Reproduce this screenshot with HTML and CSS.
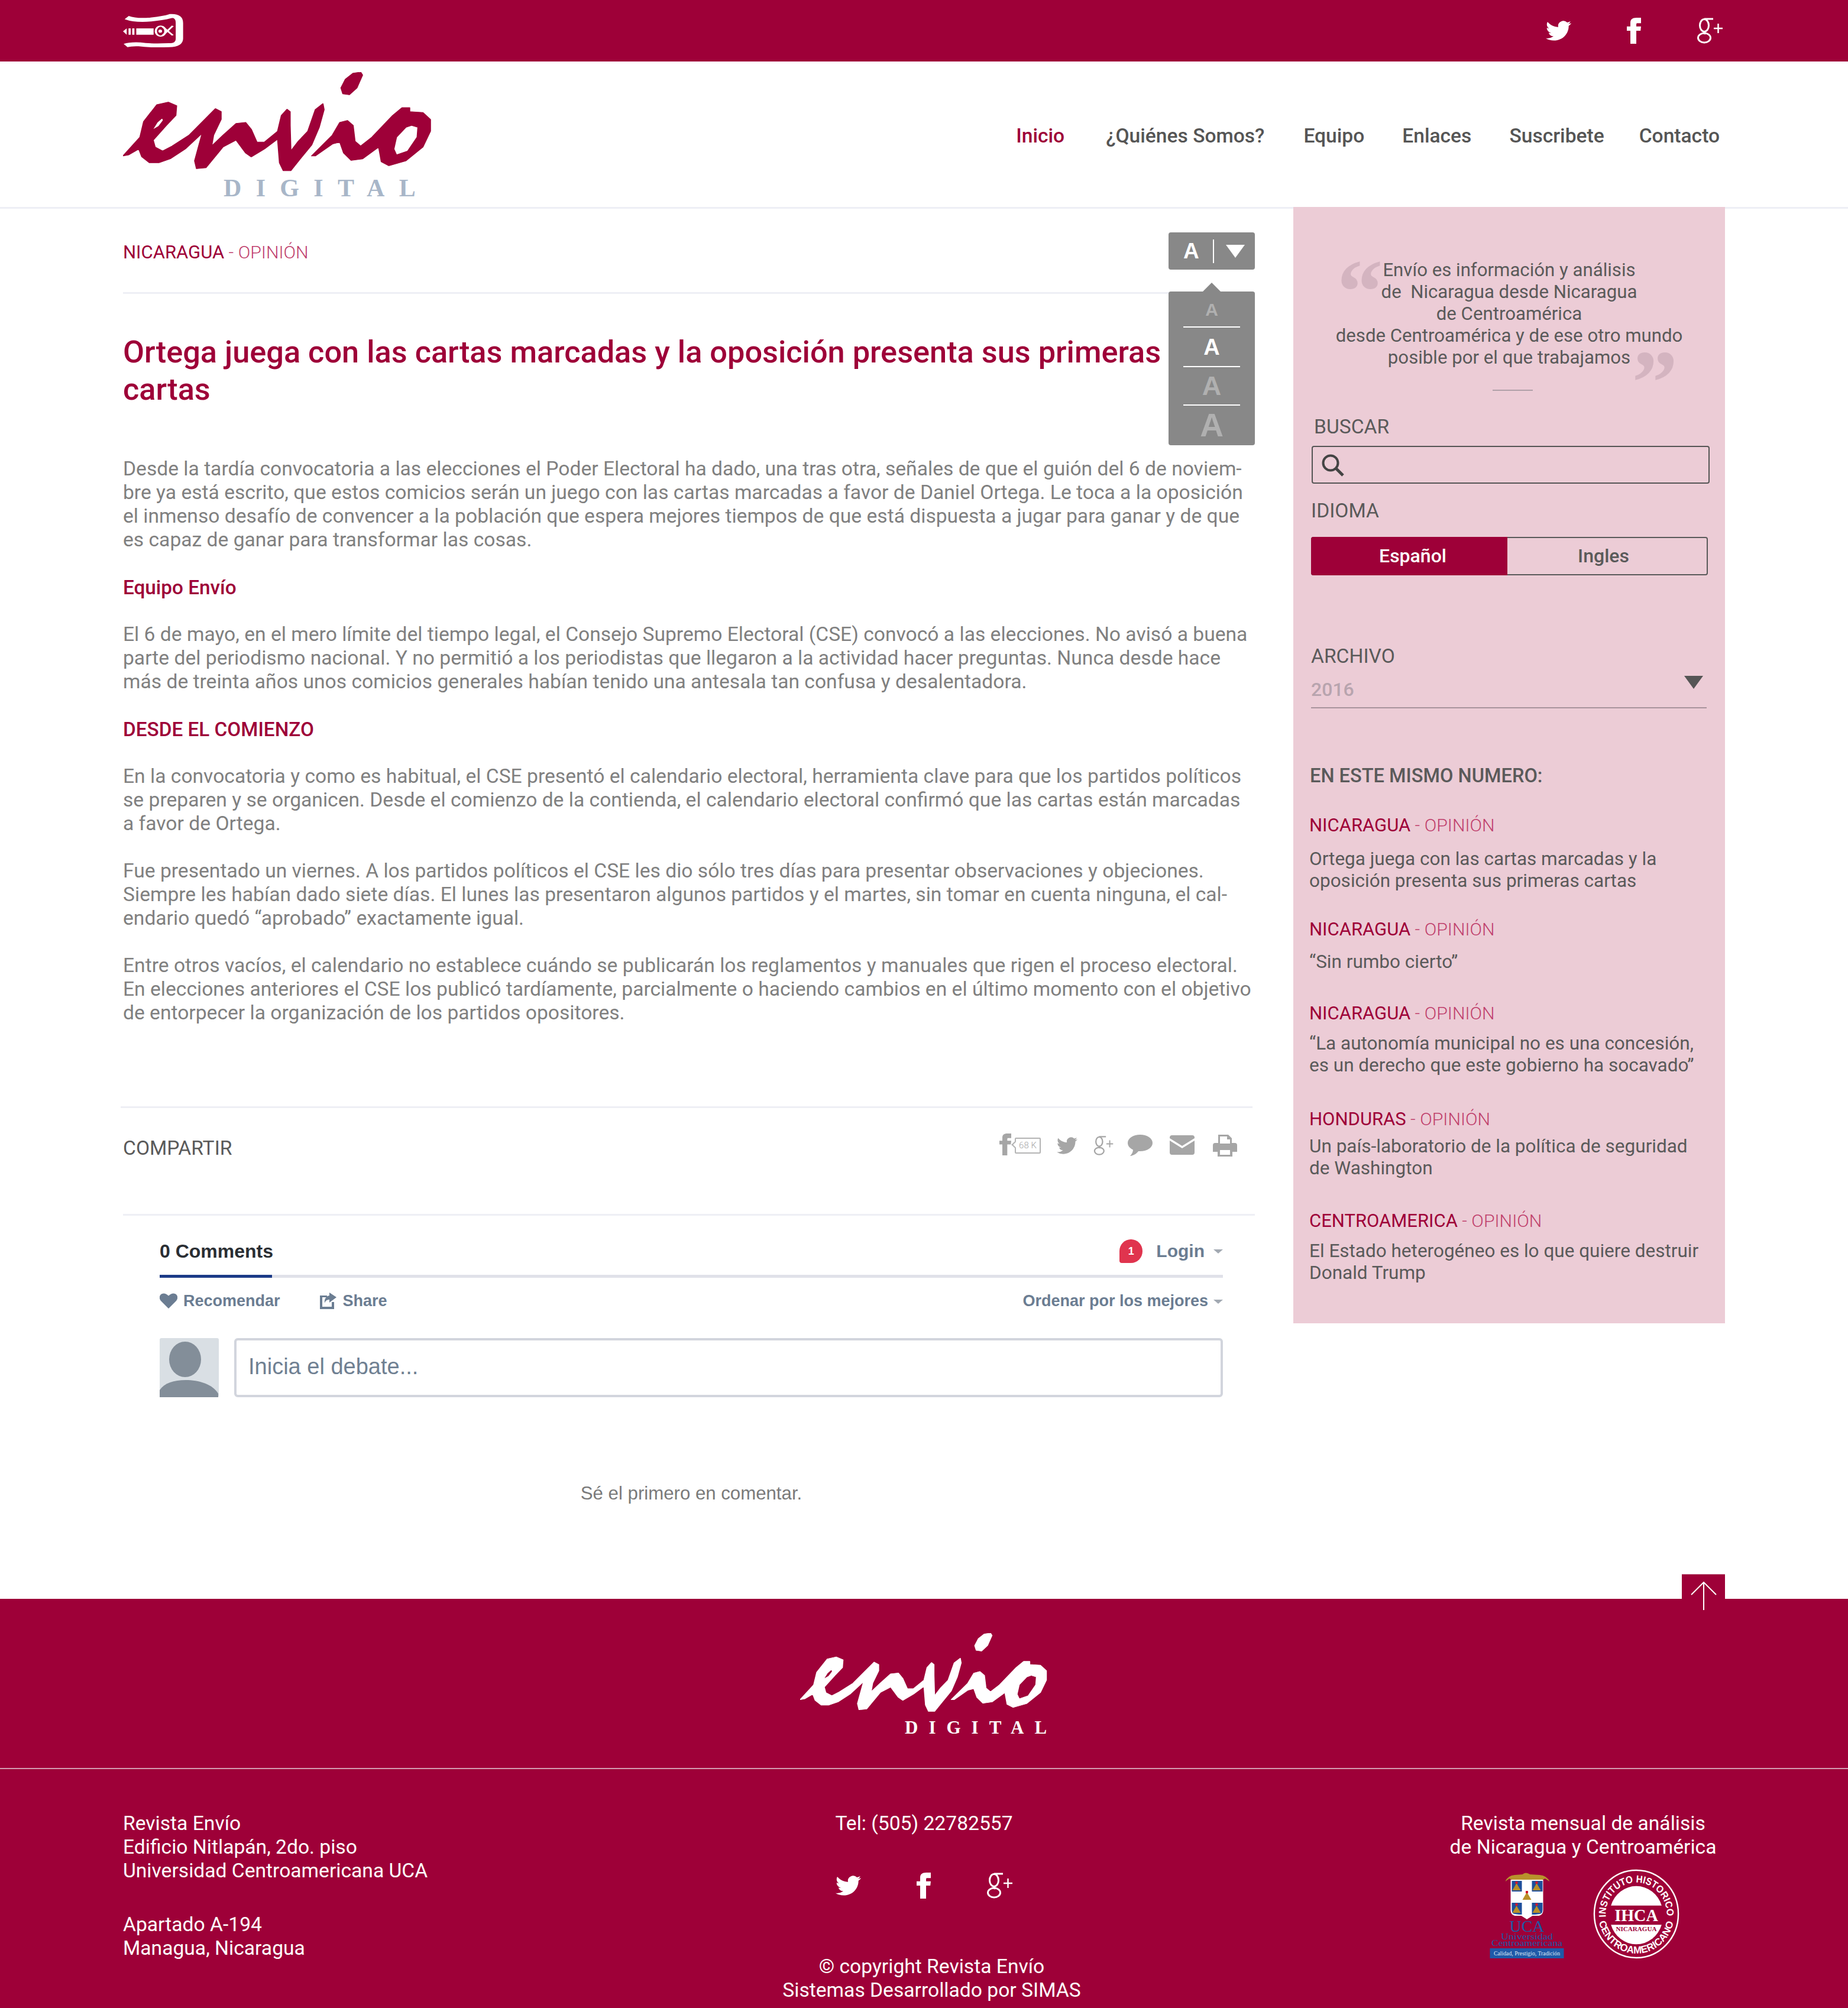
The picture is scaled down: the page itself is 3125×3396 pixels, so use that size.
FILE: index.html
```html
<!DOCTYPE html>
<html lang="es">
<head>
  <meta charset="UTF-8" />
  <title>Envío Digital</title>
  <link rel="stylesheet" href="styles.css">
</head>
<body>

  <!-- shared shapes -->
  <svg class="defs">
    <defs>
      <path id="envioMark" fill-rule="evenodd" d="M955 370L960 385L945 450L925 485L908 480L903 450L915 405L935 375Z
        M325 795L370 700L380 620L415 535L445 522L467 540L465 590L440 640L405 715L410 750L430 770L455 745L500 690L570 555L585 570L585 610L565 690L560 745L590 690L625 630L650 625L665 660L680 725L700 725L735 670L745 590L760 558L768 570L768 640L770 770L790 720L815 670L835 560L855 530L858 560L845 650L825 740L795 810L770 870L750 870L740 830L735 710L700 760L665 800L650 780L625 715L590 750L545 855L520 860L515 820L535 680L490 760L450 810L420 830L395 830L375 800L367 760L340 790Z
        M430 600L415 625L402 665L420 645L432 615Z
        M825 795L880 690L900 625L920 615L935 640L940 720L955 745L985 700L1040 590L1065 550L1085 550L1085 570L1120 575L1140 610L1140 670L1120 750L1075 820L1030 845L1010 825L1003 750L960 810L930 818L910 780L900 725L880 735L835 795Z
        M1090 640L1107 650L1105 700L1080 770L1050 790L1043 760L1050 700L1075 650Z"/>
      <path id="twitterBird" d="M23.953 4.57a10 10 0 01-2.825.775 4.958 4.958 0 002.163-2.723c-.951.555-2.005.959-3.127 1.184a4.92 4.92 0 00-8.384 4.482C7.69 8.095 4.067 6.13 1.64 3.162a4.822 4.822 0 00-.666 2.475c0 1.71.87 3.213 2.188 4.096a4.904 4.904 0 01-2.228-.616v.06a4.923 4.923 0 003.946 4.827 4.996 4.996 0 01-2.212.085 4.936 4.936 0 004.604 3.417 9.867 9.867 0 01-6.102 2.105c-.39 0-.779-.023-1.17-.067a13.995 13.995 0 007.557 2.209c9.053 0 13.998-7.496 13.998-13.985 0-.21 0-.42-.015-.63A9.935 9.935 0 0024 4.59z"/>
      <path id="fbLetter" d="M9 8H6v4h3v12h5V12h3.6l.4-4h-4V6.3c0-1 .2-1.3 1.1-1.3H18V0h-3.8C10.6 0 9 1.6 9 4.6V8z"/>
      <g id="gplusMark" fill="none" stroke="currentColor" stroke-width="3">
        <ellipse cx="13" cy="13" rx="7.5" ry="10.5"/>
        <ellipse cx="13" cy="34" rx="10.5" ry="8"/>
        <path d="M13 2H28M15 23Q10 26 15 27"/>
        <path d="M29 18H44M36.500 10V26" stroke-width="2.500"/>
      </g>
    </defs>
  </svg>

  <div class="topbar">
    <svg class="pen-logo" viewBox="325 65 170 180" preserveAspectRatio="none">
      <path d="M335 88Q360 105 400 98Q440 90 455 80Q478 78 478 115V195Q478 228 450 228Q400 232 370 224Q345 222 332 230" fill="none" stroke="#fff" stroke-width="20"/>
      <path d="M325 158L335 143V175ZM340 143H346V175H340ZM350 143H356V175H350ZM361 143H408V175H361Z" fill="#fff"/>
      <ellipse cx="427" cy="157" rx="13" ry="25" fill="none" stroke="#fff" stroke-width="6"/>
      <ellipse cx="426" cy="157" rx="5" ry="8" fill="#fff"/>
      <path d="M432 180L460 130M432 134L460 178" fill="none" stroke="#fff" stroke-width="6"/>
    </svg>
    <div class="social">
      <svg class="ico-tw" viewBox="0 0 24 20" preserveAspectRatio="none"><use href="#twitterBird" transform="translate(0 -2)"/></svg>
      <svg class="ico-fb" viewBox="6 0 12 24" preserveAspectRatio="none"><use href="#fbLetter"/></svg>
      <svg class="ico-gp" viewBox="0 0 45 44"><use href="#gplusMark"/></svg>
    </div>
  </div>

  <header class="header">
    <div class="brand">
      <svg class="brand-mark" viewBox="325 370 820 510" preserveAspectRatio="none"><use href="#envioMark"/></svg>
      <div class="brand-sub">DIGITAL</div>
    </div>
    <nav class="nav">
      <a class="active">Inicio</a>
      <a>¿Quiénes Somos?</a>
      <a>Equipo</a>
      <a>Enlaces</a>
      <a>Suscribete</a>
      <a>Contacto</a>
    </nav>
  </header>

  <div class="main">
    <main class="article">
      <div class="crumb-row">
        <div class="crumb"><b>NICARAGUA</b><span> - OPINIÓN</span></div>
        <div class="fontsize">
          <div class="fontsize-btn">
            <span class="fs-a">A</span>
            <span class="fs-sep"></span>
            <span class="fs-caret"></span>
          </div>
          <div class="fontsize-menu">
            <div class="fs-item fs-1">A</div>
            <div class="fs-item fs-2">A</div>
            <div class="fs-item fs-3">A</div>
            <div class="fs-item fs-4">A</div>
          </div>
        </div>
      </div>

      <h1 class="title">Ortega juega con las cartas marcadas y la oposición presenta sus primeras<br>cartas</h1>

      <p>Desde la tardía convocatoria a las elecciones el Poder Electoral ha dado, una tras otra, señales de que el guión del 6 de noviem-<br>bre ya está escrito, que estos comicios serán un juego con las cartas marcadas a favor de Daniel Ortega. Le toca a la oposición<br>el inmenso desafío de convencer a la población que espera mejores tiempos de que está dispuesta a jugar para ganar y de que<br>es capaz de ganar para transformar las cosas.</p>
      <p class="sub">Equipo Envío</p>
      <p>El 6 de mayo, en el mero límite del tiempo legal, el Consejo Supremo Electoral (CSE) convocó a las elecciones. No avisó a buena<br>parte del periodismo nacional. Y no permitió a los periodistas que llegaron a la actividad hacer preguntas. Nunca desde hace<br>más de treinta años unos comicios generales habían tenido una antesala tan confusa y desalentadora.</p>
      <p class="sub">DESDE EL COMIENZO</p>
      <p>En la convocatoria y como es habitual, el CSE presentó el calendario electoral, herramienta clave para que los partidos políticos<br>se preparen y se organicen. Desde el comienzo de la contienda, el calendario electoral confirmó que las cartas están marcadas<br>a favor de Ortega.</p>
      <p>Fue presentado un viernes. A los partidos políticos el CSE les dio sólo tres días para presentar observaciones y objeciones.<br>Siempre les habían dado siete días. El lunes las presentaron algunos partidos y el martes, sin tomar en cuenta ninguna, el cal-<br>endario quedó “aprobado” exactamente igual.</p>
      <p>Entre otros vacíos, el calendario no establece cuándo se publicarán los reglamentos y manuales que rigen el proceso electoral.<br>En elecciones anteriores el CSE los publicó tardíamente, parcialmente o haciendo cambios en el último momento con el objetivo<br>de entorpecer la organización de los partidos opositores.</p>

      <div class="share">
        <span class="share-label">COMPARTIR</span>
        <div class="share-icons">
          <svg class="sh-fb" viewBox="6 0 12 24" preserveAspectRatio="none"><use href="#fbLetter"/></svg>
          <span class="sh-count">68 K</span>
          <svg class="sh-tw" viewBox="0 0 24 20" preserveAspectRatio="none"><use href="#twitterBird" transform="translate(0 -2)"/></svg>
          <svg class="sh-gp" viewBox="0 0 45 44"><use href="#gplusMark"/></svg>
          <svg class="sh-chat" viewBox="0 0 42 36"><path d="M21 0C9.500 0 0 6 0 14c0 5 3.500 9 9 11.500C9 29 7 33 4 36c6-.500 11-4 14-8h3c11.500 0 21-6 21-14S32.500 0 21 0z"/></svg>
          <svg class="sh-mail" viewBox="0 0 42 33"><path d="M4 0H38A4 4 0 0 1 42 4V5L21 18L0 5V4A4 4 0 0 1 4 0ZM0 9L21 22L42 9V29A4 4 0 0 1 38 33H4A4 4 0 0 1 0 29Z"/></svg>
          <svg class="sh-print" viewBox="0 0 41 37"><path d="M9 0H26L32 6V14H37A4 4 0 0 1 41 18V29H33V37H8V29H0V18A4 4 0 0 1 4 14H9ZM12 3V15H29V8H24V3ZM12 26V34H29V26Z" fill-rule="evenodd"/></svg>
        </div>
      </div>

      <section class="comments">
        <div class="cm-head">
          <span class="cm-count">0 Comments</span>
          <span class="cm-login">
            <span class="cm-badge">1</span>
            Login
            <i class="cm-caret"></i>
          </span>
        </div>
        <div class="cm-actions">
          <span class="cm-act">
            <svg class="cm-heart" viewBox="0 0 30 26"><path d="M15 26L2.500 13.500C-1 10-1 5 2 2.300 5-.500 10-.500 15 4.500 20-.500 25-.500 28 2.300 31 5 31 10 27.500 13.500Z"/></svg>
            Recomendar
          </span>
          <span class="cm-act cm-share">
            <svg class="cm-export" viewBox="0 0 28 28"><path d="M0 5H12V8H4V24H20V16H24V28H0ZM16 0L28 8L16 17V12C12 12 9 14 8 18 7 10 11 6 16 5Z"/></svg>
            Share
          </span>
          <span class="cm-sort">Ordenar por los mejores<i class="cm-caret"></i></span>
        </div>
        <div class="cm-form">
          <svg class="cm-avatar" viewBox="0 0 100 100">
            <rect width="100" height="100" rx="3" fill="#d9dfe4"/>
            <ellipse cx="43" cy="36" rx="27" ry="30" fill="#838e99"/>
            <path d="M0 100V88C8 76 24 71 44 71 66 71 90 78 99 94V100Z" fill="#838e99"/>
          </svg>
          <div class="cm-input">Inicia el debate...</div>
        </div>
        <div class="cm-empty">Sé el primero en comentar.</div>
      </section>
    </main>

    <aside class="sidebar">
      <div class="quote">
        <span class="q-mark q-open">“</span>
        Envío es información y análisis<br>de&nbsp; Nicaragua desde Nicaragua<br>de Centroamérica<br>desde Centroamérica y de ese otro mundo<br>posible por el que trabajamos
        <span class="q-mark q-close">”</span>
      </div>
      <div class="q-rule"></div>

      <div class="side-label label-buscar">BUSCAR</div>
      <div class="search">
        <svg class="search-ico" viewBox="0 0 38 38"><circle cx="15" cy="15" r="12.500" fill="none" stroke="#444" stroke-width="4"/><path d="M24 24L36 36" stroke="#444" stroke-width="5"/></svg>
      </div>

      <div class="side-label label-idioma">IDIOMA</div>
      <div class="lang">
        <span class="lang-on">Español</span>
        <span class="lang-off">Ingles</span>
      </div>

      <div class="side-label label-archivo">ARCHIVO</div>
      <div class="year">
        <span>2016</span>
        <i class="year-caret"></i>
      </div>

      <div class="side-label label-numero">EN ESTE MISMO NUMERO:</div>
      <div class="issue">
        <div class="issue-item">
          <div class="issue-cat"><b>NICARAGUA</b><span> - OPINIÓN</span></div>
          <div class="issue-text">Ortega juega con las cartas marcadas y la<br>oposición presenta sus primeras cartas</div>
        </div>
        <div class="issue-item">
          <div class="issue-cat"><b>NICARAGUA</b><span> - OPINIÓN</span></div>
          <div class="issue-text">“Sin rumbo cierto”</div>
        </div>
        <div class="issue-item">
          <div class="issue-cat"><b>NICARAGUA</b><span> - OPINIÓN</span></div>
          <div class="issue-text">“La autonomía municipal no es una concesión,<br>es un derecho que este gobierno ha socavado”</div>
        </div>
        <div class="issue-item">
          <div class="issue-cat"><b>HONDURAS</b><span> - OPINIÓN</span></div>
          <div class="issue-text">Un país-laboratorio de la política de seguridad<br>de Washington</div>
        </div>
        <div class="issue-item">
          <div class="issue-cat"><b>CENTROAMERICA</b><span> - OPINIÓN</span></div>
          <div class="issue-text">El Estado heterogéneo es lo que quiere destruir<br>Donald Trump</div>
        </div>
      </div>
    </aside>
  </div>

  <footer class="footer">
    <a class="to-top">
      <svg viewBox="0 0 44 48"><path d="M22 48V1M1 22L22 1L43 22" fill="none" stroke="#fff" stroke-width="2"/></svg>
    </a>
    <div class="foot-brand">
      <div class="foot-brand-in">
        <svg class="foot-mark" viewBox="325 370 820 510" preserveAspectRatio="none"><use href="#envioMark"/></svg>
        <div class="foot-sub">DIGITAL</div>
      </div>
    </div>
    <div class="foot-cols">
      <div class="foot-left">
        <div>Revista Envío<br>Edificio Nitlapán, 2do. piso<br>Universidad Centroamericana UCA</div>
        <div class="foot-po">Apartado A-194<br>Managua, Nicaragua</div>
      </div>
      <div class="foot-mid">
        <div>Tel: (505) 22782557</div>
        <div class="social foot-social">
          <svg class="ico-tw" viewBox="0 0 24 20" preserveAspectRatio="none"><use href="#twitterBird" transform="translate(0 -2)"/></svg>
          <svg class="ico-fb" viewBox="6 0 12 24" preserveAspectRatio="none"><use href="#fbLetter"/></svg>
          <svg class="ico-gp" viewBox="0 0 45 44"><use href="#gplusMark"/></svg>
        </div>
        <div class="copy">© copyright Revista Envío<br>Sistemas Desarrollado por SIMAS</div>
      </div>
      <div class="foot-right">
        <div>Revista mensual de análisis<br>de Nicaragua y Centroamérica</div>
        <div class="foot-logos">
          <svg class="uca" viewBox="0 0 125 145">
            <path d="M26 15Q30 5 42 4L55 3Q60-2 68 3L84 4Q96 5 101 15L93 10Q88 14 70 12H55Q38 14 33 10Z" fill="#b8922c"/>
            <path d="M35 12H90V64Q90 71 83 73H72L62.500 79L53 73H42Q35 71 35 64Z" fill="#fff"/>
            <path d="M37 14H54V32H37ZM71 14H89V32H71ZM37 51H54V71Q44 71 39 69Q37 67 37 63ZM71 51H89V63Q89 67 87 69Q82 71 71 71Z" fill="#1f4f9c"/>
            <path d="M38 30L45 18L52 30ZM72 30L79 18L86 30ZM38 68L45 56L52 68ZM72 68L79 56L86 68ZM55 46L62.500 33L70 46Z" fill="#b98f28"/>
            <path d="M43 15H47V19H43ZM77 15H81V19H77ZM43 52H47V56H43ZM77 52H81V56H77ZM60.500 31H64.500V35H60.500Z" fill="#d3162a"/>
            <text class="uca-big" x="62.500" y="100" text-anchor="middle">UCA</text>
            <text class="uca-mid" x="62.500" y="113" text-anchor="middle" textLength="88" lengthAdjust="spacingAndGlyphs">Universidad</text>
            <text class="uca-mid" x="62.500" y="124" text-anchor="middle" textLength="120" lengthAdjust="spacingAndGlyphs">Centroamericana</text>
            <rect y="128" width="125" height="17" fill="#1e5aa8"/>
            <text class="uca-tag" x="62.500" y="140" text-anchor="middle" textLength="112" lengthAdjust="spacingAndGlyphs">Calidad, Prestigio, Tradición</text>
          </svg>
          <svg class="ihca" viewBox="0 0 150 150" preserveAspectRatio="none">
            <defs>
              <path id="arcTop" d="M22.200 80A53 53 0 1 1 127.800 80"/>
              <path id="arcBot" d="M10.300 88A66 66 0 0 0 139.700 88"/>
            </defs>
            <circle cx="75" cy="75" r="73" fill="none" stroke="#fff" stroke-width="2.500"/>
            <text class="ihca-ring"><textPath href="#arcTop" textLength="174" lengthAdjust="spacingAndGlyphs">INSTITUTO HISTORICO</textPath></text>
            <text class="ihca-ring"><textPath href="#arcBot" textLength="180" lengthAdjust="spacingAndGlyphs">CENTROAMERICANO</textPath></text>
            <path d="M31 61A46 46 0 0 1 119 61ZM31 93H119A46 46 0 0 1 31 93Z" fill="#fff"/>
            <text class="ihca-big" x="75" y="87" text-anchor="middle">IHCA</text>
            <text class="ihca-nic" x="75" y="104" text-anchor="middle" textLength="71" lengthAdjust="spacingAndGlyphs">NICARAGUA</text>
          </svg>
        </div>
      </div>
    </div>
  </footer>

</body>
</html>
```

FILE: styles.css
```css
body {
  margin: 0;
  width: 3125px;
  height: 3396px;
  overflow: hidden;
  font-family: Roboto, "Liberation Sans", sans-serif;
  font-size: 33.62px;
  line-height: 40px;
  color: #808080;
  background: #fff;
  white-space: nowrap;
}

.defs {
  position: absolute;
  width: 0;
  height: 0;
}

/* top bar */
.topbar {
  height: 104px;
  box-sizing: border-box;
  padding: 0 211px 0 208px;
  background: #9e0038;
  display: flex;
  align-items: center;
  justify-content: space-between;
}

.pen-logo {
  width: 106px;
  height: 60px;
}

.social {
  display: flex;
  align-items: center;
  gap: 94px;
  color: #fff;
}

.social svg {
  fill: currentColor;
}

.ico-tw { width: 43px; height: 34px; }
.ico-fb { width: 24px; height: 44px; }
.ico-gp { width: 45px; height: 44px; }

/* header */
.header {
  height: 249px;
  box-sizing: border-box;
  border-bottom: 3px solid #eeeff5;
  padding: 18px 0 0 208px;
  display: flex;
  justify-content: space-between;
}

.brand {
  width: 523px;
  color: #9e0038;
}

.brand-mark {
  display: block;
  width: 523px;
  height: 170px;
  fill: currentColor;
  stroke: currentColor;
  stroke-width: 3;
  stroke-linejoin: round;
}

.brand-sub {
  margin: 10px 0 0 170px;
  font-family: "Liberation Serif", serif;
  font-weight: bold;
  font-size: 42px;
  line-height: 32px;
  letter-spacing: 24.300px;
  color: #a8b6c8;
}

.nav {
  display: flex;
  gap: 66px;
  padding: 88px 217px 0 0;
  font-weight: 500;
  font-size: 33.600px;
  color: #555;
}

.nav .active {
  color: #9e0038;
}

.nav a:nth-child(2) { margin-left: 4px; }
.nav a:nth-child(4) { margin-left: -2px; }
.nav a:nth-child(5) { margin-left: -2px; }
.nav a:nth-child(6) { margin-left: -7px; }

/* page body */
.main {
  display: flex;
  align-items: flex-start;
  height: 2351px;
  padding-left: 208px;
}

.article {
  width: 1914px;
}

.sidebar {
  width: 730px;
  box-sizing: border-box;
  margin: -3px 0 0 65px;
  padding: 88px 30px 67px;
  background: #ecccd6;
  color: #5a5a5a;
  font-size: 31.500px;
}

.crumb-row {
  height: 141px;
  display: flex;
  justify-content: space-between;
  border-bottom: 3px solid #eeeff5;
  position: relative;
}

.crumb {
  padding-top: 54px;
  font-size: 30.300px;
  color: #c0406c;
  font-weight: 300;
}

.crumb b,
.issue-cat b {
  font-size: 31px;
  font-weight: 400;
  color: #9e0038;
}

.fontsize {
  position: absolute;
  top: 40px;
  right: 0;
  width: 146px;
}

.fontsize-btn {
  height: 63px;
  background: #888;
  border-radius: 4px;
  display: flex;
  align-items: center;
  position: relative;
}

.fs-a {
  margin-left: 25px;
  font: bold 37px/1 "Liberation Sans", sans-serif;
  color: #fff;
}

.fs-sep {
  width: 2px;
  height: 40px;
  margin-left: 23px;
  background: #fff;
}

.fs-caret {
  margin-left: 20px;
  border-left: 16px solid transparent;
  border-right: 16px solid transparent;
  border-top: 22px solid #fff;
}

.fontsize-menu {
  position: absolute;
  top: 100px;
  left: 0;
  width: 146px;
  height: 260px;
  box-sizing: border-box;
  padding: 2px 25px 0;
  background: #888;
  border-radius: 4px;
  text-align: center;
  font-family: "Liberation Sans", sans-serif;
  font-weight: bold;
  color: #b0b0b0;
}

.fontsize-menu::before {
  content: "";
  position: absolute;
  top: -15px;
  left: 58px;
  border-left: 15px solid transparent;
  border-right: 15px solid transparent;
  border-bottom: 15px solid #888;
}

.fs-item {
  border-bottom: 2px solid #fff;
  display: flex;
  align-items: center;
  justify-content: center;
  line-height: 1;
}

.fs-1 { height: 57px; font-size: 30px; }
.fs-2 { height: 65px; font-size: 38px; color: #fff; }
.fs-3 { height: 63px; font-size: 45px; }
.fs-4 { height: 67px; font-size: 55px; border-bottom: 0; }

.title {
  margin: 67px 0 83px;
  font-weight: 500;
  font-size: 52.300px;
  line-height: 63px;
  color: #9e0038;
}

.article p {
  margin: 0 0 40px;
}

.article .sub {
  font-weight: 500;
  font-size: 33.300px;
  color: #9e0038;
  position: relative;
  top: 1px;
}

/* share row */
.share {
  height: 182px;
  margin: 138px 4px 0 -4px;
  padding-left: 4px;
  box-sizing: border-box;
  border-top: 3px solid #eeeff5;
  display: flex;
  justify-content: space-between;
  color: #5a5a5a;
}

.share-label {
  padding-top: 48px;
}

.share-icons {
  display: flex;
  align-items: flex-start;
  padding: 43px 26px 0 0;
  fill: #a6a6a6;
  color: #a6a6a6;
}

.sh-fb { width: 20px; height: 37px; }
.sh-count {
  position: relative;
  width: 44px;
  height: 27px;
  box-sizing: border-box;
  margin: 7px 27px 0 6px;
  border: 2px solid #b4b4b4;
  border-radius: 2px;
  font-size: 15px;
  line-height: 23px;
  text-align: center;
  font-weight: 300;
}
.sh-count::before {
  content: "";
  position: absolute;
  top: 6px;
  left: -6px;
  width: 8px;
  height: 8px;
  background: #fff;
  border-left: 2px solid #b4b4b4;
  border-bottom: 2px solid #b4b4b4;
  transform: rotate(45deg);
  box-sizing: border-box;
}
.sh-tw { width: 35px; height: 29px; margin: 6px 27px 0 0; }
.sh-gp { width: 34px; height: 35px; margin: 3px 24px 0 0; }
.sh-chat { width: 42px; height: 36px; margin: 2px 29px 0 0; }
.sh-mail { width: 42px; height: 33px; margin: 3px 31px 0 0; }
.sh-print { width: 41px; height: 37px; margin-top: 2px; }

/* comments */
.comments {
  border-top: 3px solid #eeeff5;
  padding: 0 54px 0 62px;
  color: #6b7d92;
  font-family: "Liberation Sans", sans-serif;
  font-weight: bold;
  font-size: 27px;
}

.cm-head {
  height: 105px;
  box-sizing: border-box;
  display: flex;
  justify-content: space-between;
  align-items: center;
  border-bottom: 5px solid #e0e1e9;
  position: relative;
  padding-top: 20px;
}

.cm-head::after {
  content: "";
  position: absolute;
  left: 0;
  bottom: -5px;
  width: 190px;
  height: 5px;
  background: #1b3a87;
}

.cm-count {
  font-size: 32px;
  color: #2a2e33;
}

.cm-login {
  display: flex;
  align-items: center;
  font-size: 30px;
}

.cm-badge {
  width: 39px;
  height: 40px;
  margin-right: 23px;
  border-radius: 50% 50% 50% 10%;
  background: #e0344e;
  color: #fff;
  font-size: 18px;
  line-height: 40px;
  text-align: center;
}

.cm-caret {
  display: inline-block;
  margin-left: 15px;
  border-left: 8px solid transparent;
  border-right: 8px solid transparent;
  border-top: 7px solid #a2a9b2;
  vertical-align: middle;
}

.cm-sort .cm-caret {
  margin-left: 9px;
}

.cm-actions {
  height: 78px;
  display: flex;
  align-items: center;
}

.cm-act {
  display: flex;
  align-items: center;
}

.cm-heart {
  width: 30px;
  height: 26px;
  margin-right: 10px;
  fill: #6b7d92;
}

.cm-share {
  margin-left: 67px;
}

.cm-export {
  width: 28px;
  height: 28px;
  margin-right: 11px;
  fill: #6b7d92;
}

.cm-sort {
  margin-left: auto;
}

.cm-form {
  display: flex;
  gap: 26px;
  margin-top: 24px;
}

.cm-avatar {
  width: 100px;
  height: 100px;
  display: block;
}

.cm-input {
  flex: 1;
  height: 100px;
  box-sizing: border-box;
  border: 4px solid #d2d5dd;
  border-radius: 6px;
  padding: 0 20px;
  line-height: 88px;
  font-weight: normal;
  font-size: 38px;
  color: #6f8092;
}

.cm-empty {
  margin-top: 143px;
  text-align: center;
  font-weight: normal;
  font-size: 31.200px;
  color: #7a7a7a;
}

/* sidebar */
.quote {
  position: relative;
  text-align: center;
  line-height: 37px;
  width: 670px;
  font-size: 31.200px;
}

.q-mark {
  position: absolute;
  font-family: "Liberation Serif", serif;
  font-weight: bold;
  font-size: 155px;
  line-height: 1;
  color: #d4b4c0;
}

.q-open { left: 44px; top: -22px; }
.q-close { right: 50px; top: 132px; }

.q-rule {
  width: 68px;
  height: 2px;
  margin: 36px 0 0 307px;
  background: #b0a0a8;
}

.side-label {
  font-size: 33.600px;
  line-height: 40px;
}

.label-buscar { margin: 41px 0 0 5px; }
.label-idioma { margin-top: 26px; }
.label-archivo { margin-top: 117px; }
.label-numero {
  margin: 94px 0 44px -2px;
  font-size: 32.600px;
  font-weight: 500;
}

.search {
  width: 673px;
  height: 64px;
  box-sizing: border-box;
  margin: 12px 0 0 1px;
  border: 2px solid #555;
  border-radius: 4px;
  padding: 12px 0 0 15px;
}

.search-ico {
  width: 38px;
  height: 38px;
  display: block;
}

.lang {
  width: 671px;
  height: 65px;
  box-sizing: border-box;
  margin-top: 24px;
  border: 2px solid #5a5a5a;
  border-radius: 4px;
  display: flex;
  font-weight: 500;
  font-size: 32px;
  line-height: 61px;
  text-align: center;
}

.lang-on {
  width: 320px;
  margin: -2px 0 -2px -2px;
  padding: 2px 0 0 12px;
  background: #9e0038;
  color: #fff;
  border-radius: 4px 0 0 4px;
}

.lang-off {
  flex: 1;
  padding-right: 12px;
}

.year {
  width: 669px;
  height: 52px;
  margin-top: 16px;
  box-sizing: border-box;
  border-bottom: 2px solid #a8939c;
  display: flex;
  justify-content: space-between;
  font-weight: 500;
  font-size: 32px;
  color: #b8a4ae;
}

.year-caret {
  margin: -3px 6px 0 0;
  height: 0;
  border-left: 16px solid transparent;
  border-right: 16px solid transparent;
  border-top: 22px solid #555;
}

.issue {
  margin-left: -3px;
}

.issue-cat {
  color: #c0406c;
  font-weight: 300;
  font-size: 30.300px;
}

.issue-text {
  line-height: 37px;
}

.issue-item:nth-child(1) .issue-text { margin-top: 18px; }
.issue-item:nth-child(2) { margin-top: 44px; }
.issue-item:nth-child(2) .issue-text { margin-top: 16px; }
.issue-item:nth-child(3) { margin-top: 49px; }
.issue-item:nth-child(3) .issue-text { margin-top: 12px; }
.issue-item:nth-child(4) { margin-top: 53px; }
.issue-item:nth-child(4) .issue-text { margin-top: 7px; }
.issue-item:nth-child(5) { margin-top: 51px; }
.issue-item:nth-child(5) .issue-text { margin-top: 12px; }

/* footer */
.footer {
  position: relative;
  height: 692px;
  background: #9e0038;
  color: #fff;
}

.to-top {
  position: absolute;
  top: -42px;
  left: 2844px;
  width: 73px;
  height: 42px;
  box-sizing: border-box;
  border-top: 1px solid #c77a96;
  background: #9e0038;
}

.to-top svg {
  position: absolute;
  top: 12px;
  left: 15px;
  width: 44px;
  height: 48px;
}

.foot-brand {
  height: 288px;
  box-sizing: border-box;
  padding-top: 58px;
  border-bottom: 2px solid #d39cb0;
  display: flex;
  justify-content: center;
}

.foot-brand-in {
  width: 419px;
}

.foot-mark {
  display: block;
  width: 419px;
  height: 135px;
  fill: #fff;
  stroke: #fff;
  stroke-width: 3;
  stroke-linejoin: round;
}

.foot-sub {
  margin: 12px 0 0 177px;
  font-family: "Liberation Serif", serif;
  font-weight: bold;
  font-size: 31px;
  line-height: 26px;
  letter-spacing: 18px;
}

.foot-cols {
  display: grid;
  grid-template-columns: 480px 1fr 480px;
  padding: 72px 208px 0;
}

.foot-po {
  margin-top: 51px;
}

.foot-mid {
  text-align: center;
}

.foot-social {
  justify-content: center;
  margin-top: 63px;
}

.copy {
  margin-top: 95px;
  padding-left: 26px;
}

.foot-right {
  text-align: center;
}

.foot-logos {
  display: flex;
  align-items: flex-start;
  margin: 17px 0 0 82px;
  gap: 49px;
}

.uca {
  width: 126px;
  height: 145px;
  margin-top: 6px;
}

.uca-big {
  font: 28px "Liberation Serif", serif;
  fill: #1c5aa6;
}

.uca-mid {
  font: 15px "Liberation Serif", serif;
  fill: #1c5aa6;
}

.uca-tag {
  font: 11px "Liberation Serif", serif;
  fill: #dfe8f3;
}

.ihca {
  width: 146px;
  height: 152px;
}

.ihca-ring {
  font: bold 17px "Liberation Sans", sans-serif;
  fill: #fff;
}

.ihca-big {
  font: bold 29px "Liberation Serif", serif;
  fill: #fff;
}

.ihca-nic {
  font: bold 10.500px "Liberation Serif", serif;
  fill: #9e0038;
}
```
